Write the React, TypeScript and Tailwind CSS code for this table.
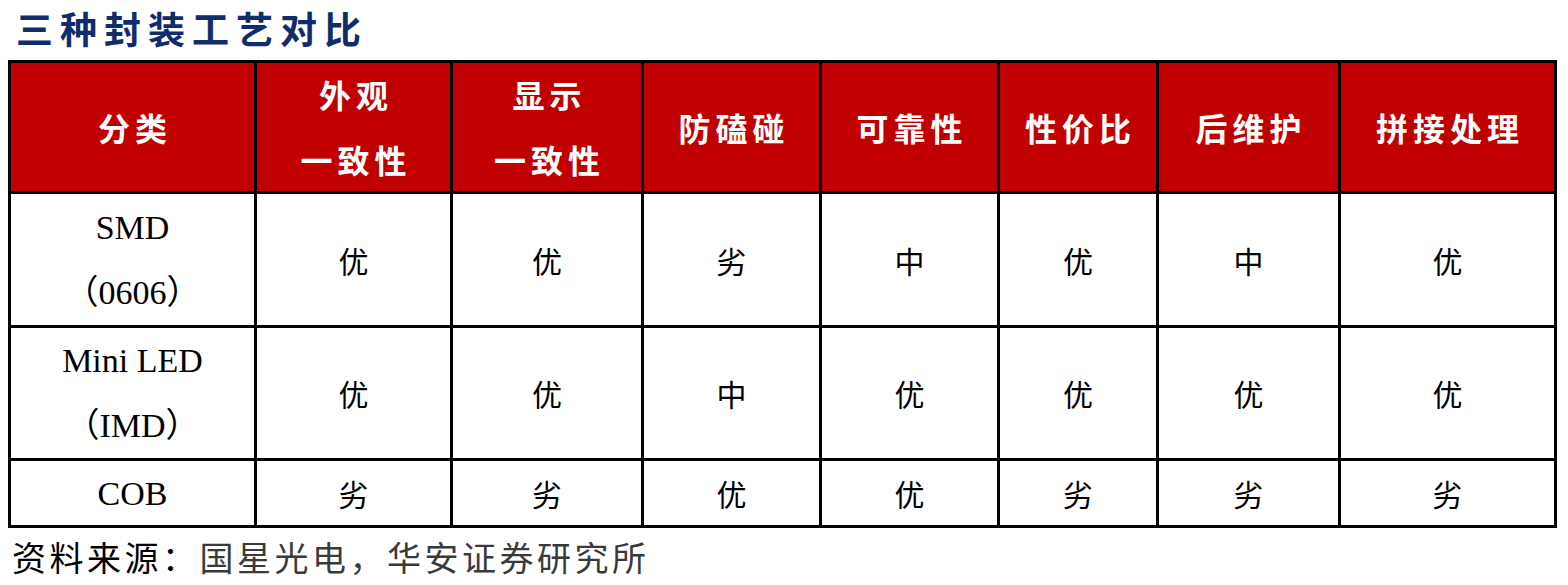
import React from "react";

const cjkSans = { fontFamily: '"Noto Sans CJK SC", "Noto Sans", sans-serif' };
const serifMix = { fontFamily: '"Liberation Serif", "Noto Sans CJK SC", serif' };

const headers: string[][] = [
  ["分类"],
  ["外观", "一致性"],
  ["显示", "一致性"],
  ["防磕碰"],
  ["可靠性"],
  ["性价比"],
  ["后维护"],
  ["拼接处理"],
];

const rows: { name: string[]; vals: string[] }[] = [
  { name: ["SMD", "（0606）"], vals: ["优", "优", "劣", "中", "优", "中", "优"] },
  { name: ["Mini LED", "（IMD）"], vals: ["优", "优", "中", "优", "优", "优", "优"] },
  { name: ["COB"], vals: ["劣", "劣", "优", "优", "劣", "劣", "劣"] },
];

export default function App() {
  return (
    <div className="w-[1568px] h-[585px] bg-white overflow-hidden">
      <div className="h-[60px] flex items-start pt-[10px] pl-[16px]">
        <span
          className="text-[37px] font-bold text-[#102c6a] tracking-[7px] leading-none"
          style={cjkSans}
        >
          三种封装工艺对比
        </span>
      </div>
      <div className="ml-[8px] w-[1549px] bg-black p-[3px] grid grid-cols-[243px_193px_188px_175px_175px_156px_179px_213px] grid-rows-[128px_131px_130px_64px] gap-[3px]">
        {headers.map((h, i) => (
          <div
            key={"h" + i}
            className="bg-[#c00000] flex flex-col items-center justify-center text-white font-bold text-[32px] leading-[65px]"
            style={cjkSans}
          >
            {h.map((line, j) => (
              <div key={j} className="tracking-[5px] pl-[5px]">
                {line}
              </div>
            ))}
          </div>
        ))}
        {rows.map((r, ri) => (
          <React.Fragment key={"r" + ri}>
            <div
              className="bg-white flex flex-col items-center justify-center text-black text-[34px] leading-[65px]"
              style={serifMix}
            >
              {r.name.map((line, j) => (
                <div key={j}>{line}</div>
              ))}
            </div>
            {r.vals.map((v, vi) => (
              <div
                key={vi}
                className="bg-white flex items-center justify-center text-black text-[30px] leading-none"
                style={cjkSans}
              >
                {v}
              </div>
            ))}
          </React.Fragment>
        ))}
      </div>
      <div className="h-[57px] flex items-center pl-[12px]">
        <span className="text-[34px] leading-none tracking-[3.5px]" style={cjkSans}>
          <span className="text-black">资料来源：</span>
          <span className="text-[#3a3a3a]">国星光电，华安证券研究所</span>
        </span>
      </div>
    </div>
  );
}
